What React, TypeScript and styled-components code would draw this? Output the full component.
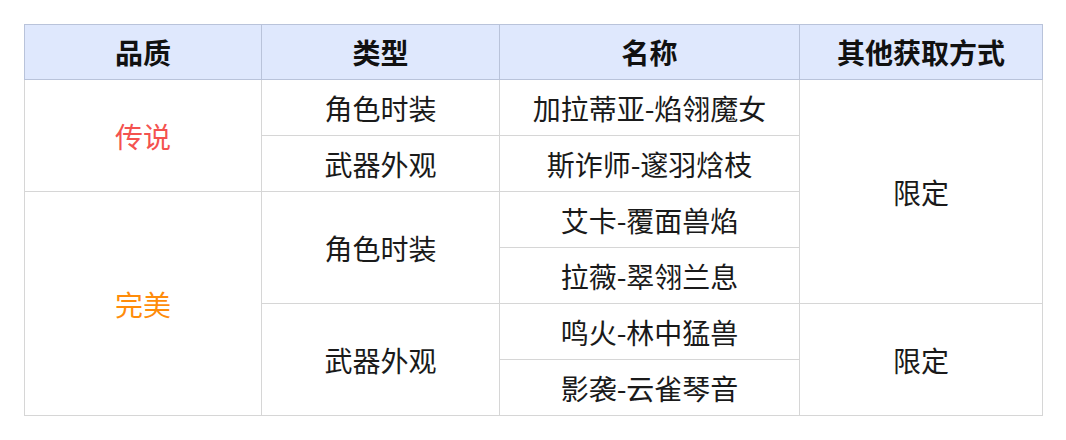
import React from "react";
import styled, { createGlobalStyle } from "styled-components";

const Global = createGlobalStyle`
  html, body { margin: 0; padding: 0; background: #ffffff; }
  body { font-family: "Noto Sans CJK SC", "Noto Sans", sans-serif; }
`;

const Page = styled.div`
  padding: 24px 24px 0 24px;
`;

const Table = styled.table`
  border-collapse: collapse;
  table-layout: fixed;
  width: 1018px;
  font-family: "Noto Sans CJK SC", "Noto Sans", sans-serif;
`;

const Th = styled.th`
  height: 54px;
  padding: 0;
  background: #dfe8fd;
  border: 1px solid #b9c3da;
  color: #111111;
  font-size: 28px;
  font-weight: 700;
  text-align: center;
  vertical-align: middle;
  line-height: 1;
`;

const Td = styled.td<{ $tone?: "red" | "orange" }>`
  height: 55px;
  padding: 0;
  border: 1px solid #d6d6d6;
  color: ${(p) => (p.$tone === "red" ? "#f4524f" : p.$tone === "orange" ? "#ff8c0a" : "#1a1a1a")};
  font-size: 28px;
  font-weight: 400;
  text-align: center;
  vertical-align: middle;
  line-height: 1;
`;

export default function App() {
  return (
    <>
      <Global />
      <Page>
        <Table>
          <colgroup>
            <col style={{ width: 237 }} />
            <col style={{ width: 238 }} />
            <col style={{ width: 300 }} />
            <col style={{ width: 243 }} />
          </colgroup>
          <thead>
            <tr>
              <Th>品质</Th>
              <Th>类型</Th>
              <Th>名称</Th>
              <Th>其他获取方式</Th>
            </tr>
          </thead>
          <tbody>
            <tr>
              <Td rowSpan={2} $tone="red">传说</Td>
              <Td>角色时装</Td>
              <Td>加拉蒂亚-焰翎魔女</Td>
              <Td rowSpan={4}>限定</Td>
            </tr>
            <tr>
              <Td>武器外观</Td>
              <Td>斯诈师-邃羽焓枝</Td>
            </tr>
            <tr>
              <Td rowSpan={4} $tone="orange">完美</Td>
              <Td rowSpan={2}>角色时装</Td>
              <Td>艾卡-覆面兽焰</Td>
            </tr>
            <tr>
              <Td>拉薇-翠翎兰息</Td>
            </tr>
            <tr>
              <Td rowSpan={2}>武器外观</Td>
              <Td>鸣火-林中猛兽</Td>
              <Td rowSpan={2}>限定</Td>
            </tr>
            <tr>
              <Td>影袭-云雀琴音</Td>
            </tr>
          </tbody>
        </Table>
      </Page>
    </>
  );
}
